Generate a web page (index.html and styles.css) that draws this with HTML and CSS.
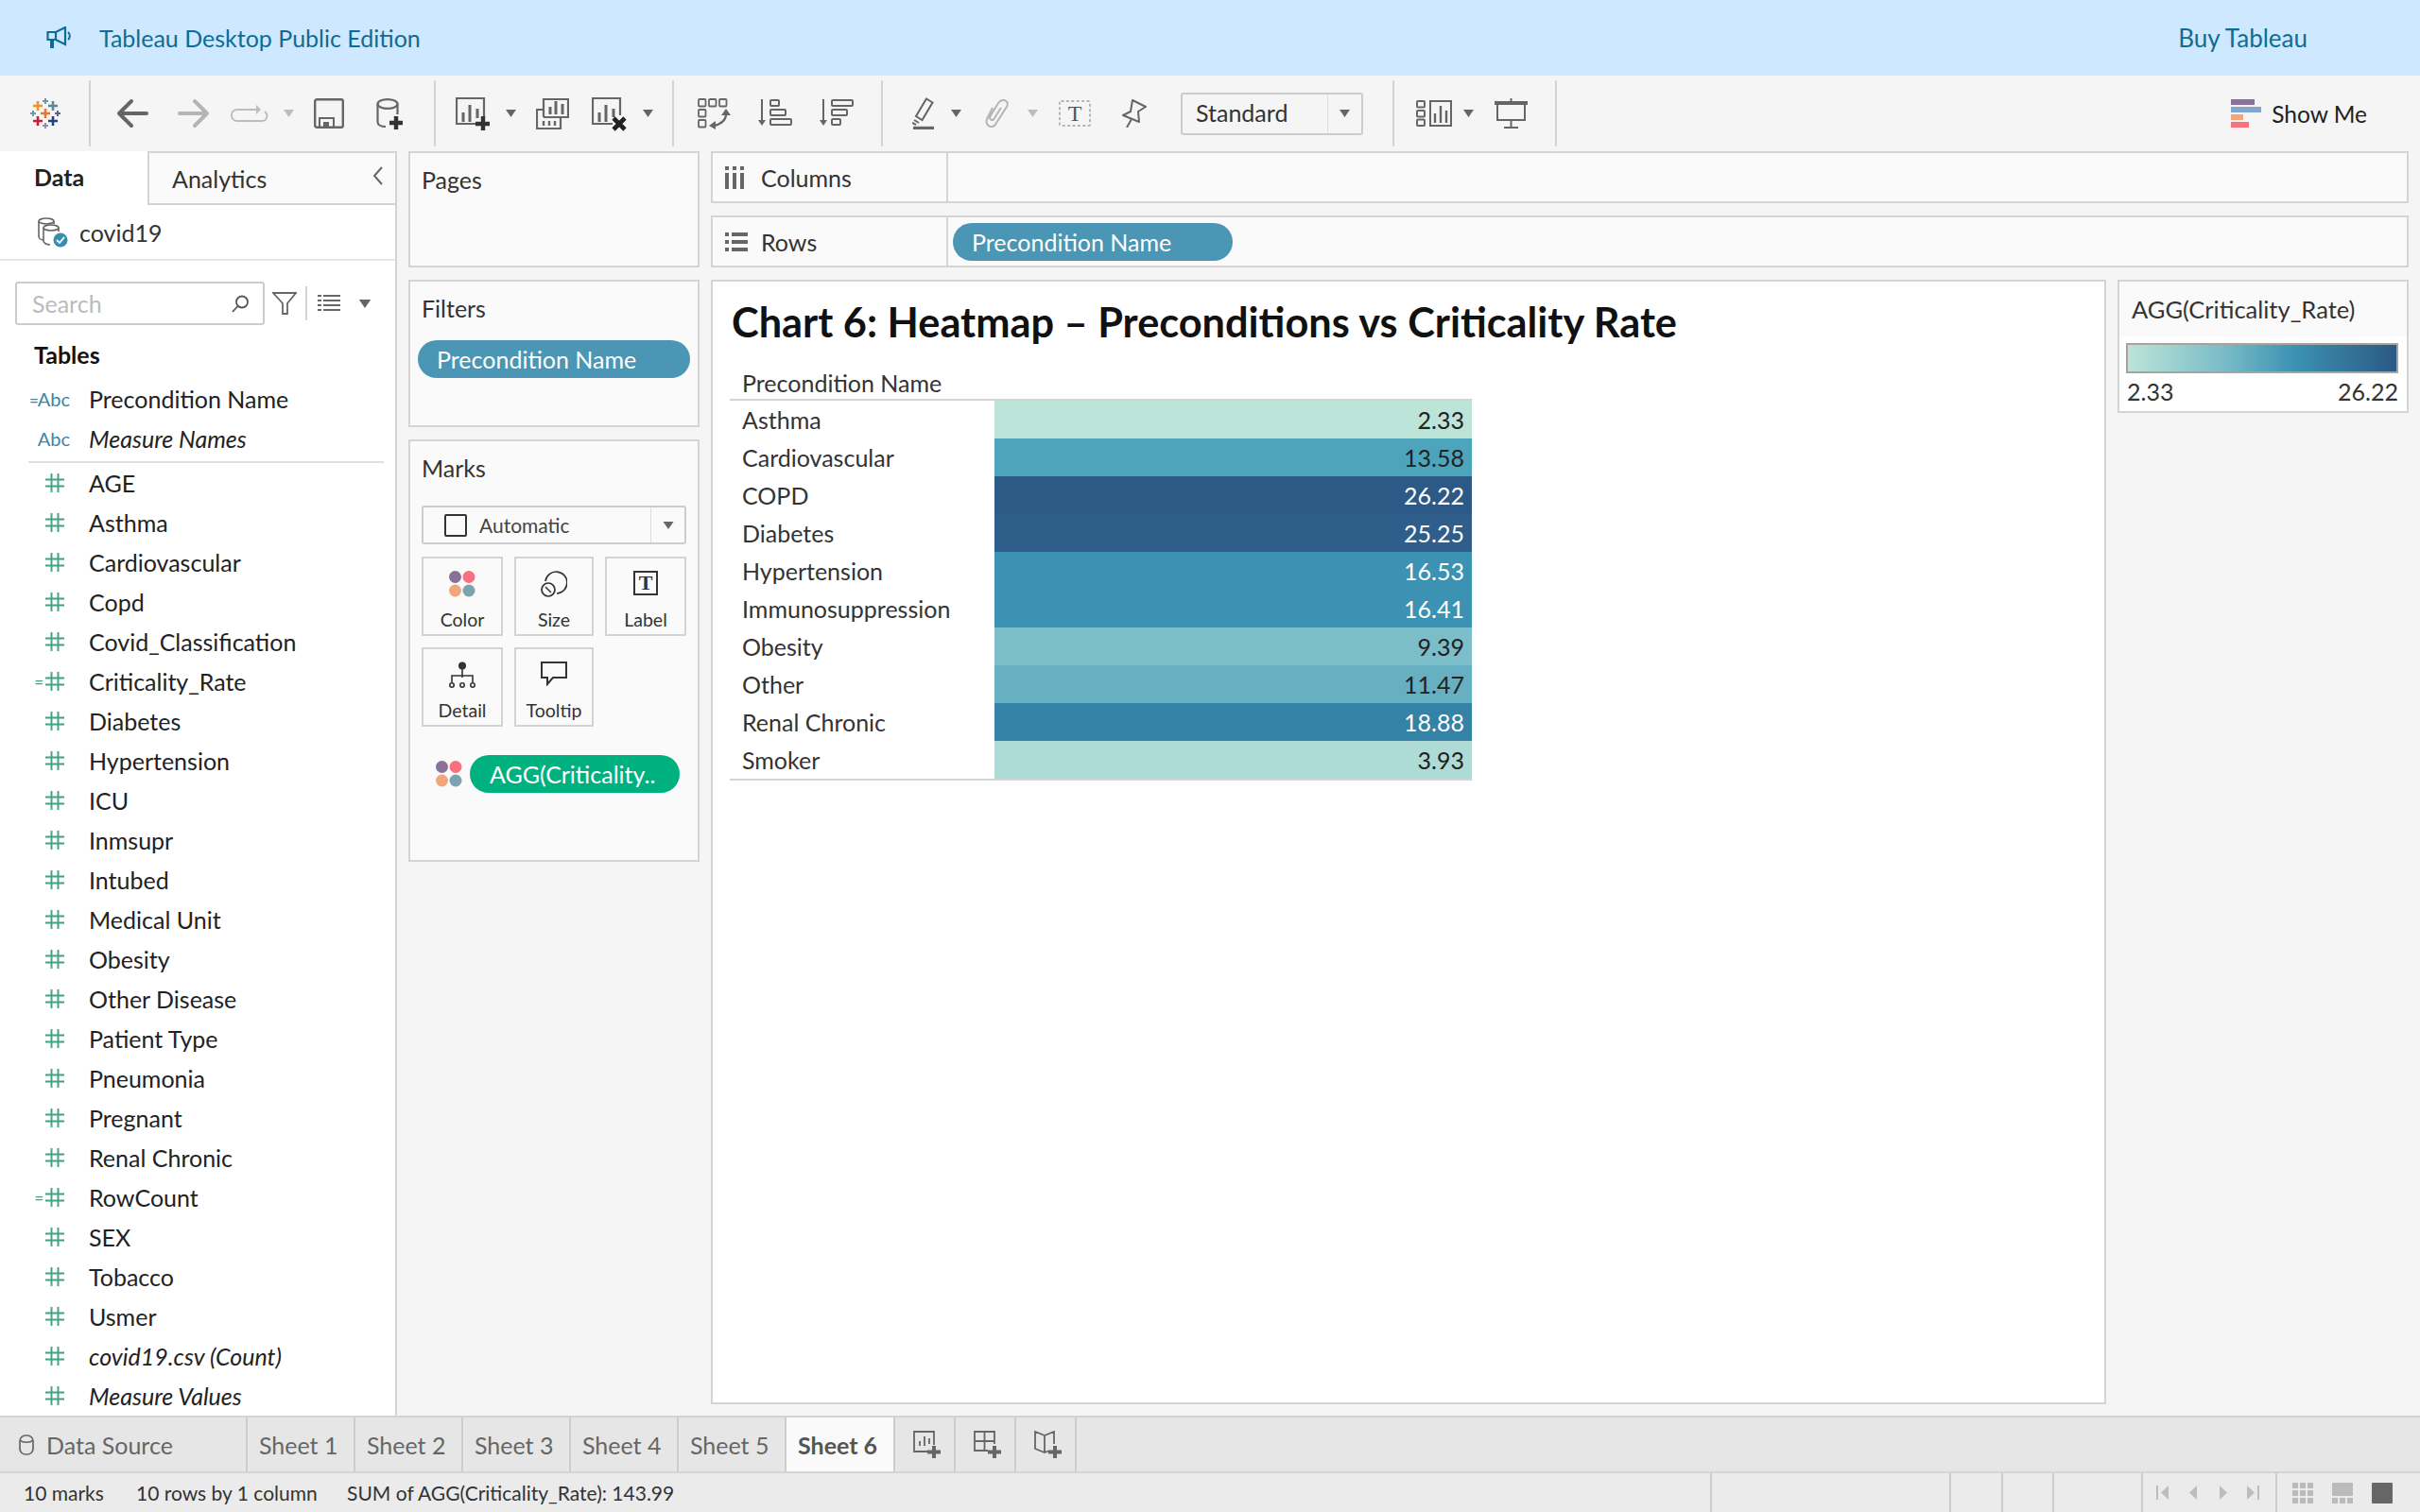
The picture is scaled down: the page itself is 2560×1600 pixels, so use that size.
FILE: index.html
```html
<!DOCTYPE html>
<html lang="en">
<head>
    <meta charset="UTF-8">
    <title>Tableau Desktop Public Edition</title>
    <link rel="stylesheet" href="styles.css">
</head>
<body>
    <svg class="defs" width="0" height="0">
        <symbol id="hash" viewBox="0 0 20 20">
            <path d="M6.5 0V20M13.5 0V20M0 6.5H20M0 13.5H20" fill="none" stroke="#3ea37e" stroke-width="1.9"/>
        </symbol>
        <symbol id="dots" viewBox="0 0 28 28">
            <circle cx="6.5" cy="6.5" r="6.5" fill="#8b7099"/>
            <circle cx="21" cy="6.5" r="6.5" fill="#f9707f"/>
            <circle cx="6.5" cy="21" r="6.5" fill="#f1a67b"/>
            <circle cx="21" cy="21" r="6.5" fill="#7ea3b0"/>
        </symbol>
        <symbol id="caret" viewBox="0 0 11 8">
            <path d="M0 0H11L5.5 8Z"/>
        </symbol>
    </svg>

    <div class="banner">
        <svg class="banner-icon" width="26" height="24" viewBox="0 0 26 24" fill="none" stroke="#0f6c94" stroke-width="2.2">
            <path d="M1.500 6H10L20 1V19L10 14H1.500Z"/>
            <path d="M10 6V14"/>
            <path d="M6 14V23" stroke-width="4"/>
            <path d="M23 6C25.500 8 25.500 12 23 14" stroke-width="2"/>
        </svg>
        <span>Tableau Desktop Public Edition</span>
        <span class="buy">Buy Tableau</span>
    </div>

    <div class="toolbar">
        <svg class="t-logo" width="33" height="33" viewBox="0 0 33 33" fill="none" stroke-width="2.6">
            <path d="M11 16H21M16 11V21" stroke="#e8762c"/>
            <path d="M3 8H13M8 3V13" stroke="#f0932f"/>
            <path d="M19 8H29M24 3V13" stroke="#5b879b"/>
            <path d="M3 24H13M8 19V29" stroke="#c72035"/>
            <path d="M19 24H29M24 19V29" stroke="#1f447e"/>
            <g stroke-width="2">
                <path d="M13 3H19M16 0V6" stroke="#7099a6"/>
                <path d="M0 16H6M3 13V19" stroke="#7099a6"/>
                <path d="M26 16H32M29 13V19" stroke="#5b6591"/>
                <path d="M13 29H19M16 26V32" stroke="#7f93b2"/>
            </g>
        </svg>
        <i class="sep s-a"></i>
        <svg class="t-back" width="34" height="32" viewBox="0 0 34 32" fill="none" stroke="#666" stroke-width="4" stroke-linecap="round" stroke-linejoin="round">
            <path d="M32 16H3M16 3L3 16L16 29"/>
        </svg>
        <svg class="t-fwd" width="34" height="32" viewBox="0 0 34 32" fill="none" stroke="#b5b5b5" stroke-width="4" stroke-linecap="round" stroke-linejoin="round">
            <path d="M2 16H31M18 3L31 16L18 29"/>
        </svg>
        <svg class="t-loop" width="40" height="18" viewBox="0 0 40 18" fill="none" stroke="#bdbdbd" stroke-width="2">
            <path d="M28 5H7C-1 5-1 17 7 17H33C39 17 40 10 36 7"/>
            <path d="M27 0L32 5L27 10Z" fill="#bdbdbd" stroke="none"/>
        </svg>
        <svg class="caret dim t-c1" width="11" height="8"><use href="#caret"/></svg>
        <svg class="t-save" width="32" height="32" viewBox="0 0 32 32" fill="none" stroke="#666" stroke-width="2.4">
            <rect x="1.2" y="1.2" width="29.6" height="29.6" rx="2"/>
            <path d="M6 31V21H21V31" stroke-width="2"/>
            <rect x="10" y="25" width="6" height="6" fill="#666" stroke="none"/>
        </svg>
        <svg class="t-ds" width="30" height="33" viewBox="0 0 30 33" fill="none" stroke="#666" stroke-width="2.2">
            <ellipse cx="12" cy="6" rx="10.500" ry="4.800"/>
            <path d="M1.500 6V25C1.500 28 5 30 10 30M22.500 6V17"/>
            <path d="M21 19V33M14 26H28" stroke="#333" stroke-width="4.400"/>
        </svg>
        <i class="sep s-b"></i>
        <svg class="t-new" width="36" height="37" viewBox="0 0 36 37" fill="none" stroke="#666" stroke-width="2.2">
            <path d="M24 29H1V2H30V22"/>
            <path d="M8 27V17M15 27V9M23 23V13" stroke-width="3"/>
            <path d="M29 21V36M21 29H36" stroke="#333" stroke-width="4.400"/>
        </svg>
        <svg class="caret t-c2" width="11" height="8"><use href="#caret"/></svg>
        <svg class="t-dup" width="35" height="35" viewBox="0 0 35 35" fill="none" stroke="#666" stroke-width="2.2">
            <path d="M8 21V2H34V21H26"/>
            <path d="M15 18V10M21 18V4M28 18V7" stroke-width="3"/>
            <path d="M8 13H1V33H26V21H8"/>
            <path d="M8 25V30M14 25V30M20 25V30" stroke-width="2.400"/>
        </svg>
        <svg class="t-clear" width="37" height="37" viewBox="0 0 37 37" fill="none" stroke="#666" stroke-width="2.2">
            <path d="M22 29H1V2H30V20"/>
            <path d="M8 27V17M15 27V9M23 22V13" stroke-width="3"/>
            <path d="M23 23L35 35M35 23L23 35" stroke="#222" stroke-width="4.600"/>
        </svg>
        <svg class="caret t-c3" width="11" height="8"><use href="#caret"/></svg>
        <i class="sep s-c"></i>
        <svg class="t-swap" width="35" height="33" viewBox="0 0 35 33" fill="none" stroke="#666" stroke-width="1.8">
            <rect x="1" y="1" width="7.500" height="7.500" rx="1"/>
            <rect x="12" y="1" width="7.500" height="7.500" rx="1"/>
            <rect x="23" y="1" width="7.500" height="7.500" rx="1"/>
            <rect x="1" y="12" width="7.500" height="7.500" rx="1"/>
            <rect x="1" y="23" width="7.500" height="7.500" rx="1"/>
            <path d="M30 17C30 23 24 28 17 29" stroke-width="2.400"/>
            <path d="M30 11L35 18H25ZM12 29L19 24V33Z" fill="#666" stroke="none"/>
        </svg>
        <svg class="t-asc" width="36" height="33" viewBox="0 0 36 33" fill="none" stroke="#666" stroke-width="2">
            <path d="M4 1V24"/>
            <path d="M0 23H8L4 29Z" fill="#666" stroke="none"/>
            <rect x="13" y="2" width="9" height="6" rx="1"/>
            <rect x="13" y="12" width="16" height="6" rx="1"/>
            <rect x="13" y="22" width="22" height="6" rx="1"/>
        </svg>
        <svg class="t-asc" width="36" height="33" viewBox="0 0 36 33" fill="none" stroke="#666" stroke-width="2">
            <path d="M4 1V24"/>
            <path d="M0 23H8L4 29Z" fill="#666" stroke="none"/>
            <rect x="13" y="2" width="22" height="6" rx="1"/>
            <rect x="13" y="12" width="16" height="6" rx="1"/>
            <rect x="13" y="22" width="9" height="6" rx="1"/>
        </svg>
        <i class="sep s-d"></i>
        <svg class="t-pen" width="23" height="34" viewBox="0 0 23 34" fill="none" stroke="#666" stroke-width="2">
            <path d="M15 1.500L21.500 5.500L10.500 24L4 20Z"/>
            <path d="M2 24L7 27M0 27L4 29"/>
            <path d="M1 32.500H23" stroke-width="3.400"/>
        </svg>
        <svg class="caret t-c4" width="11" height="8"><use href="#caret"/></svg>
        <svg class="t-clip" width="26" height="30" viewBox="0 0 26 30" fill="none" stroke="#b5b5b5" stroke-width="2">
            <path d="M8 9L2.500 20C0 25 3 28.500 6 29C9 29.500 11 27 12 25L23 8C25 4 23 1.500 20 1C17 .5 15.500 2 14 4L5.500 18C4.500 20 5.500 21.500 7 22C8.500 22.500 9.500 21 10 20L17 9"/>
        </svg>
        <svg class="caret dim t-c5" width="11" height="8"><use href="#caret"/></svg>
        <svg class="t-text" width="34" height="28" viewBox="0 0 34 28">
            <rect x="1" y="1" width="32" height="26" rx="1.500" fill="none" stroke="#b5b5b5" stroke-width="2" stroke-dasharray="3 2.400"/>
            <text x="17" y="22" text-anchor="middle" class="svg-t">T</text>
        </svg>
        <svg class="t-pin" width="26" height="30" viewBox="0 0 26 30" fill="none" stroke="#666" stroke-width="2">
            <path d="M11 1L25 8L17 13L18 24L1 17L9 13Z" stroke-linejoin="round"/>
            <path d="M10 21L5 30"/>
        </svg>
        <div class="std">
            <span class="std-label">Standard</span>
            <span class="std-arrow"><svg class="caret" width="11" height="8"><use href="#caret"/></svg></span>
        </div>
        <i class="sep s-e"></i>
        <svg class="t-bars" width="38" height="28" viewBox="0 0 38 28" fill="none" stroke="#666" stroke-width="2">
            <rect x="1" y="1" width="8" height="6.500" rx="1"/>
            <rect x="1" y="11" width="8" height="6.500" rx="1"/>
            <rect x="1" y="20.500" width="8" height="6.500" rx="1"/>
            <rect x="15" y="1" width="22" height="26"/>
            <path d="M20 24V14M26 24V6M32 24V11" stroke-width="2.400"/>
        </svg>
        <svg class="caret t-c6" width="11" height="8"><use href="#caret"/></svg>
        <svg class="t-pres" width="35" height="32" viewBox="0 0 35 32" fill="none" stroke="#666" stroke-width="2">
            <path d="M17.500 0V4"/>
            <path d="M0 5H35" stroke-width="4"/>
            <path d="M3 7V23H32V7M17.500 23V31M10 31H25"/>
        </svg>
        <i class="sep s-f"></i>
        <div class="showme">
            <div class="showme-icon">
                <i class="sm1"></i><i class="sm2"></i><i class="sm3"></i><i class="sm4"></i>
            </div>
            <span>Show Me</span>
        </div>
    </div>

    <div class="main">
        <div class="sidebar">
            <div class="side-tabs">
                <div class="side-tab active">Data</div>
                <div class="side-tab">Analytics
                    <svg class="collapse" width="11" height="20" viewBox="0 0 11 20" fill="none" stroke="#666" stroke-width="2"><path d="M10 1L2 10L10 19"/></svg>
                </div>
            </div>
            <div class="source">
                <svg width="32" height="32" viewBox="0 0 32 32" fill="none" stroke="#666" stroke-width="1.600">
                    <ellipse cx="9" cy="4" rx="8" ry="3"/>
                    <path d="M1 4V20C1 22 3 24 6 24M17 4V7"/>
                    <ellipse cx="14" cy="11" rx="8" ry="3"/>
                    <path d="M6 11V25C6 27 9 29 13 29M22 11V15"/>
                    <circle cx="24" cy="24" r="7.500" fill="#3a8db0" stroke="none"/>
                    <path d="M20 24L23 27L28 21" stroke="#fff" stroke-width="1.800"/>
                </svg>
                <span>covid19</span>
            </div>
            <div class="search-row">
                <div class="search">
                    <span>Search</span>
                    <svg width="18" height="19" viewBox="0 0 18 19" fill="none" stroke="#555" stroke-width="1.800"><circle cx="11" cy="7.500" r="6"/><path d="M6.500 12L1 18"/></svg>
                </div>
                <svg class="filter-icon" width="26" height="24" viewBox="0 0 26 24" fill="none" stroke="#666" stroke-width="1.800"><path d="M1 1H25L16 12V23H11V12Z"/></svg>
                <i class="mini-sep"></i>
                <svg class="list-icon" width="24" height="18" viewBox="0 0 24 18" fill="none" stroke="#666" stroke-width="2"><path d="M0 1H4M6 1H24M0 6H4M6 6H24M0 11H4M6 11H24M0 16H4M6 16H24"/></svg>
                <svg class="caret list-caret" width="14" height="9" viewBox="0 0 11 8"><path d="M0 0H11L5.500 8Z"/></svg>
            </div>
            <div class="tables-title">Tables</div>
            <div class="field"><span class="abc"><b>=</b>Abc</span><span>Precondition Name</span></div>
            <div class="field"><span class="abc">Abc</span><em>Measure Names</em></div>
            <div class="field-line"></div>
            <div class="field"><span class="num"><svg><use href="#hash"/></svg></span><span>AGE</span></div>
            <div class="field"><span class="num"><svg><use href="#hash"/></svg></span><span>Asthma</span></div>
            <div class="field"><span class="num"><svg><use href="#hash"/></svg></span><span>Cardiovascular</span></div>
            <div class="field"><span class="num"><svg><use href="#hash"/></svg></span><span>Copd</span></div>
            <div class="field"><span class="num"><svg><use href="#hash"/></svg></span><span>Covid_Classification</span></div>
            <div class="field"><span class="num"><b>=</b><svg><use href="#hash"/></svg></span><span>Criticality_Rate</span></div>
            <div class="field"><span class="num"><svg><use href="#hash"/></svg></span><span>Diabetes</span></div>
            <div class="field"><span class="num"><svg><use href="#hash"/></svg></span><span>Hypertension</span></div>
            <div class="field"><span class="num"><svg><use href="#hash"/></svg></span><span>ICU</span></div>
            <div class="field"><span class="num"><svg><use href="#hash"/></svg></span><span>Inmsupr</span></div>
            <div class="field"><span class="num"><svg><use href="#hash"/></svg></span><span>Intubed</span></div>
            <div class="field"><span class="num"><svg><use href="#hash"/></svg></span><span>Medical Unit</span></div>
            <div class="field"><span class="num"><svg><use href="#hash"/></svg></span><span>Obesity</span></div>
            <div class="field"><span class="num"><svg><use href="#hash"/></svg></span><span>Other Disease</span></div>
            <div class="field"><span class="num"><svg><use href="#hash"/></svg></span><span>Patient Type</span></div>
            <div class="field"><span class="num"><svg><use href="#hash"/></svg></span><span>Pneumonia</span></div>
            <div class="field"><span class="num"><svg><use href="#hash"/></svg></span><span>Pregnant</span></div>
            <div class="field"><span class="num"><svg><use href="#hash"/></svg></span><span>Renal Chronic</span></div>
            <div class="field"><span class="num"><b>=</b><svg><use href="#hash"/></svg></span><span>RowCount</span></div>
            <div class="field"><span class="num"><svg><use href="#hash"/></svg></span><span>SEX</span></div>
            <div class="field"><span class="num"><svg><use href="#hash"/></svg></span><span>Tobacco</span></div>
            <div class="field"><span class="num"><svg><use href="#hash"/></svg></span><span>Usmer</span></div>
            <div class="field"><span class="num"><svg><use href="#hash"/></svg></span><em>covid19.csv (Count)</em></div>
            <div class="field"><span class="num"><svg><use href="#hash"/></svg></span><em>Measure Values</em></div>
        </div>

        <div class="cards">
            <div class="card pages"><div class="card-title">Pages</div></div>
            <div class="card filters">
                <div class="card-title">Filters</div>
                <div class="pill pill-blue">Precondition Name</div>
            </div>
            <div class="card marks">
                <div class="card-title">Marks</div>
                <div class="mark-type">
                    <i class="mark-box"></i>
                    <span class="mark-name">Automatic</span>
                    <span class="mark-arrow"><svg class="caret" width="12" height="8" viewBox="0 0 11 8"><path d="M0 0H11L5.500 8Z"/></svg></span>
                </div>
                <div class="mark-grid">
                    <div class="mark-btn">
                        <svg width="28" height="28"><use href="#dots"/></svg>
                        <span>Color</span>
                    </div>
                    <div class="mark-btn">
                        <svg width="28" height="28" viewBox="0 0 28 28" fill="none" stroke="#333" stroke-width="1.700">
                            <path d="M5 11A11.500 11.500 0 1 1 17 24"/>
                            <circle cx="8" cy="20" r="7"/>
                            <path d="M5 17L11 23" stroke-width="1.500"/>
                        </svg>
                        <span>Size</span>
                    </div>
                    <div class="mark-btn">
                        <svg width="26" height="26" viewBox="0 0 26 26">
                            <rect x="1" y="1" width="24" height="24" fill="none" stroke="#333" stroke-width="2"/>
                            <text x="13" y="20" text-anchor="middle" class="svg-l">T</text>
                        </svg>
                        <span>Label</span>
                    </div>
                    <div class="mark-btn">
                        <svg width="28" height="28" viewBox="0 0 28 28" fill="none" stroke="#333" stroke-width="1.600">
                            <circle cx="14" cy="4.500" r="4" fill="#333" stroke="none"/>
                            <path d="M14 8V17M3 22V15H25V22"/>
                            <circle cx="3" cy="25" r="2.200"/>
                            <circle cx="14" cy="25" r="2.200"/>
                            <circle cx="25" cy="25" r="2.200"/>
                        </svg>
                        <span>Detail</span>
                    </div>
                    <div class="mark-btn">
                        <svg width="28" height="26" viewBox="0 0 28 26" fill="none" stroke="#333" stroke-width="2">
                            <path d="M1 1H27V17H13L7 24V17H1Z"/>
                        </svg>
                        <span>Tooltip</span>
                    </div>
                </div>
                <div class="mark-pill-row">
                    <svg width="28" height="28"><use href="#dots"/></svg>
                    <div class="pill pill-green">AGG(Criticality..</div>
                </div>
            </div>
        </div>

        <div class="work">
            <div class="card shelf">
                <div class="shelf-label">
                    <svg width="20" height="24" viewBox="0 0 20 24" fill="#666"><rect x="0" y="0" width="4" height="4"/><rect x="8" y="0" width="4" height="4"/><rect x="16" y="0" width="4" height="4"/><rect x="0" y="7" width="4" height="17"/><rect x="8" y="7" width="4" height="17"/><rect x="16" y="7" width="4" height="17"/></svg>
                    <span>Columns</span>
                </div>
            </div>
            <div class="card shelf">
                <div class="shelf-label">
                    <svg width="24" height="20" viewBox="0 0 24 20" fill="#666"><rect x="0" y="0" width="4" height="4"/><rect x="7" y="0" width="17" height="4"/><rect x="0" y="8" width="4" height="4"/><rect x="7" y="8" width="17" height="4"/><rect x="0" y="16" width="4" height="4"/><rect x="7" y="16" width="17" height="4"/></svg>
                    <span>Rows</span>
                </div>
                <div class="pill pill-blue pill-row">Precondition Name</div>
            </div>
            <div class="stage">
                <div class="viz">
                    <h1 class="viz-title">Chart 6: Heatmap – Preconditions vs Criticality Rate</h1>
                    <div class="hm">
                        <div class="hm-head">Precondition Name</div>
                        <div class="hm-row"><span class="hm-name">Asthma</span><span class="hm-cell c1">2.33</span></div>
                        <div class="hm-row"><span class="hm-name">Cardiovascular</span><span class="hm-cell c2">13.58</span></div>
                        <div class="hm-row"><span class="hm-name">COPD</span><span class="hm-cell c3 light">26.22</span></div>
                        <div class="hm-row"><span class="hm-name">Diabetes</span><span class="hm-cell c4 light">25.25</span></div>
                        <div class="hm-row"><span class="hm-name">Hypertension</span><span class="hm-cell c5 light">16.53</span></div>
                        <div class="hm-row"><span class="hm-name">Immunosuppression</span><span class="hm-cell c5 light">16.41</span></div>
                        <div class="hm-row"><span class="hm-name">Obesity</span><span class="hm-cell c6">9.39</span></div>
                        <div class="hm-row"><span class="hm-name">Other</span><span class="hm-cell c7">11.47</span></div>
                        <div class="hm-row"><span class="hm-name">Renal Chronic</span><span class="hm-cell c8 light">18.88</span></div>
                        <div class="hm-row"><span class="hm-name">Smoker</span><span class="hm-cell c9">3.93</span></div>
                    </div>
                </div>
                <div class="card legend">
                    <div class="legend-title">AGG(Criticality_Rate)</div>
                    <div class="legend-body">
                        <div class="legend-bar"></div>
                        <div class="legend-labels"><span>2.33</span><span>26.22</span></div>
                    </div>
                </div>
            </div>
        </div>
    </div>

    <div class="tabs">
        <div class="tab tab-source">
            <svg width="16" height="22" viewBox="0 0 16 22" fill="none" stroke="#666" stroke-width="1.700"><rect x="1" y="1" width="14" height="20" rx="6"/><path d="M1 6C4 9 12 9 15 6"/></svg>
            <span>Data Source</span>
        </div>
        <div class="tab">Sheet 1</div>
        <div class="tab">Sheet 2</div>
        <div class="tab">Sheet 3</div>
        <div class="tab">Sheet 4</div>
        <div class="tab">Sheet 5</div>
        <div class="tab tab-active">Sheet 6</div>
        <div class="tab tab-add">
            <svg width="30" height="30" viewBox="0 0 30 30" fill="none" stroke="#666" stroke-width="1.800">
                <path d="M16 22H1V1H22V15"/>
                <path d="M7 16V11M12 16V6M17 14V8"/>
                <path d="M22 16V29M15 22.500H29" stroke-width="4"/>
            </svg>
        </div>
        <div class="tab tab-add">
            <svg width="30" height="30" viewBox="0 0 30 30" fill="none" stroke="#666" stroke-width="1.800">
                <path d="M15 21H1V1H22V14M11.500 1V21M1 11H22"/>
                <path d="M22 16V29M15 22.500H29" stroke-width="4"/>
            </svg>
        </div>
        <div class="tab tab-add">
            <svg width="30" height="30" viewBox="0 0 30 30" fill="none" stroke="#666" stroke-width="1.800">
                <path d="M11 5L1 1V19L11 23L15 21.500M11 5L21 1V14M11 5V23"/>
                <path d="M22 16V29M15 22.500H29" stroke-width="4"/>
            </svg>
        </div>
    </div>

    <div class="status">
        <div class="status-text">
            <span class="st-marks">10 marks</span>
            <span class="st-rows">10 rows by 1 column</span>
            <span>SUM of AGG(Criticality_Rate): 143.99</span>
        </div>
        <div class="st-cell w1"></div>
        <div class="st-cell w2"></div>
        <div class="st-cell w3"></div>
        <div class="st-cell w4"></div>
        <div class="st-cell st-nav">
            <svg class="nav-first" width="13" height="15" viewBox="0 0 13 15" fill="#bdbdbd"><rect width="2" height="15"/><path d="M13 0V15L5 7.500Z"/></svg>
            <svg class="nav-prev" width="10" height="15" viewBox="0 0 10 15" fill="#bdbdbd"><path d="M9 0V15L1 7.500Z"/></svg>
            <svg class="nav-next" width="10" height="15" viewBox="0 0 10 15" fill="#bdbdbd"><path d="M1 0V15L9 7.500Z"/></svg>
            <svg class="nav-last" width="13" height="15" viewBox="0 0 13 15" fill="#bdbdbd"><rect x="11" width="2" height="15"/><path d="M0 0V15L8 7.500Z"/></svg>
        </div>
        <div class="st-cell st-views">
            <svg width="22" height="22" viewBox="0 0 22 22" fill="#bbb"><path d="M0 0h6v6H0zM8 0h6v6H8zM16 0h6v6h-6zM0 8h6v6H0zM8 8h6v6H8zM16 8h6v6h-6zM0 16h6v6H0zM8 16h6v6h-6zM16 16h6v6h-6z"/></svg>
            <svg width="22" height="22" viewBox="0 0 22 22" fill="#bbb"><path d="M0 0h22v14H0zM0 16h6v6H0zM8 16h6v6H8zM16 16h6v6h-6z"/></svg>
            <svg width="22" height="22" viewBox="0 0 22 22" fill="#666"><rect width="22" height="22" rx="1"/></svg>
        </div>
    </div>
</body>
</html>
```

FILE: styles.css
```css
* {
    box-sizing: border-box;
}
html, body {
    margin: 0;
    height: 100%;
}
body {
    display: flex;
    flex-direction: column;
    width: 2560px;
    height: 1600px;
    overflow: hidden;
    font-family: Lato, "Liberation Sans", sans-serif;
    font-size: 25px;
    color: #222;
    background-color: #f5f5f5;
}
.defs {
    position: absolute;
}
svg {
    display: block;
    flex: none;
}
i {
    display: block;
    flex: none;
}

/* top banner */
.banner {
    display: flex;
    align-items: center;
    height: 80px;
    flex: none;
    padding: 0 119px 0 49px;
    background-color: #cde8ff;
    color: #0f6c94;
}
.banner-icon {
    margin-right: 30px;
}
.buy {
    margin-left: auto;
    font-size: 26px;
}

/* toolbar */
.toolbar {
    display: flex;
    align-items: center;
    height: 80px;
    flex: none;
    padding-left: 32px;
    background-color: #f5f5f5;
}
.sep {
    width: 2px;
    height: 70px;
    background-color: #d4d4d4;
}
.caret {
    fill: #666;
}
.caret.dim {
    fill: #bdbdbd;
}
.s-a { margin-left: 29px; }
.s-b { margin-left: 31px; }
.s-c { margin-left: 20px; }
.s-d { margin-left: 29px; }
.s-e { margin-left: 31px; }
.s-f { margin-left: 29px; }
.t-back { margin-left: 27px; }
.t-fwd { margin-left: 31px; }
.t-loop { margin-left: 22px; }
.t-c1 { margin-left: 16px; }
.t-save { margin-left: 21px; }
.t-ds { margin-left: 34px; }
.t-new { margin-left: 21px; }
.t-c2 { margin-left: 17px; }
.t-dup { margin-left: 21px; }
.t-clear { margin-left: 24px; }
.t-c3 { margin-left: 17px; }
.t-swap { margin-left: 25px; }
.t-asc { margin-left: 29px; }
.t-pen { margin-left: 31px; }
.t-c4 { margin-left: 18px; }
.t-clip { margin-left: 25px; }
.t-c5 { margin-left: 19px; }
.t-text { margin-left: 22px; }
.t-pin { margin-left: 33px; }
.t-bars { margin-left: 23px; }
.t-c6 { margin-left: 12px; }
.t-pres { margin-left: 22px; }
.svg-t {
    font-family: "Liberation Serif", serif;
    font-size: 24px;
    fill: #555;
}
.svg-l {
    font-family: "Liberation Serif", serif;
    font-size: 22px;
    font-weight: bold;
    fill: #333;
}
.std {
    display: flex;
    width: 193px;
    height: 45px;
    margin-left: 36px;
    border: 2px solid #ccc;
    border-radius: 3px;
}
.std-label {
    flex: 1;
    padding-left: 14px;
    line-height: 39px;
    color: #333;
}
.std-arrow {
    display: flex;
    align-items: center;
    justify-content: center;
    width: 36px;
    border-left: 1px solid #ddd;
}
.showme {
    display: flex;
    align-items: center;
    margin-left: auto;
    padding-right: 56px;
    font-size: 24.5px;
}
.showme-icon {
    display: flex;
    flex-direction: column;
    gap: 2px;
    width: 32px;
    margin-right: 11px;
}
.showme-icon i {
    height: 6px;
}
.sm1 { width: 25px; background-color: #8b7099; }
.sm2 { width: 32px; background-color: #84a6cc; }
.sm3 { width: 13px; background-color: #f1a67b; }
.sm4 { width: 19px; background-color: #f9707f; }

/* main area */
.main {
    display: flex;
    height: 1340px;
    flex: none;
    padding-right: 12px;
    border-bottom: 2px solid #d4d4d4;
}

/* data pane */
.sidebar {
    width: 420px;
    flex: none;
    overflow: hidden;
    background-color: #fff;
    border-right: 2px solid #d4d4d4;
}
.side-tabs {
    display: flex;
    height: 57px;
}
.side-tab {
    position: relative;
    flex: 1;
    padding: 12px 0 0 24px;
    background-color: #fafafa;
    border-top: 2px solid #d4d4d4;
    border-left: 2px solid #d4d4d4;
    border-bottom: 2px solid #d4d4d4;
    color: #333;
}
.side-tab.active {
    flex: none;
    width: 156px;
    padding-left: 36px;
    background-color: #fff;
    border: 0;
    font-weight: bold;
    color: #222;
}
.collapse {
    position: absolute;
    top: 14px;
    right: 13px;
}
.source {
    display: flex;
    align-items: center;
    gap: 12px;
    height: 59px;
    padding-left: 40px;
    border-bottom: 2px solid #e6e6e6;
    color: #333;
}
.search-row {
    display: flex;
    align-items: center;
    height: 46px;
    margin-top: 22px;
    padding-left: 16px;
}
.search {
    display: flex;
    align-items: center;
    justify-content: space-between;
    width: 264px;
    height: 46px;
    padding: 0 15px 0 16px;
    border: 2px solid #ccc;
    border-radius: 3px;
    color: #bbb;
}
.filter-icon {
    margin-left: 8px;
}
.mini-sep {
    width: 2px;
    height: 36px;
    margin-left: 9px;
    background-color: #d4d4d4;
}
.list-icon {
    margin-left: 11px;
}
.list-caret {
    margin-left: 19px;
}
.tables-title {
    margin: 15px 0 10px 36px;
    font-weight: bold;
    line-height: 32px;
    color: #111;
}
.field {
    display: flex;
    align-items: center;
    height: 42px;
    white-space: nowrap;
}
.field-line {
    height: 2px;
    margin: 3px 12px 0 30px;
    background-color: #e0e0e0;
}
.abc {
    width: 74px;
    margin-right: 20px;
    font-size: 20px;
    text-align: right;
    color: #3a86a8;
}
.abc b,
.num b {
    font-size: 17px;
    font-weight: normal;
    letter-spacing: -1px;
    color: #3a86a8;
}
.num {
    display: flex;
    align-items: center;
    justify-content: flex-end;
    gap: 3px;
    width: 68px;
    margin-right: 26px;
}
.num svg {
    width: 20px;
    height: 20px;
}
.num b {
    color: #3ea37e;
}

/* cards */
.cards {
    display: flex;
    flex-direction: column;
    gap: 13px;
    width: 308px;
    flex: none;
    margin: 0 12px;
}
.card {
    background-color: #fafafa;
    border: 2px solid #d4d4d4;
}
.card-title {
    padding: 13px 0 0 12px;
    color: #333;
}
.pages {
    height: 123px;
}
.filters {
    height: 156px;
}
.marks {
    height: 447px;
}
.pill {
    height: 40px;
    border-radius: 20px;
    line-height: 40px;
    color: #fff;
    white-space: nowrap;
}
.pill-blue {
    background-color: #4a96b4;
    padding-left: 20px;
}
.filters .pill {
    width: 288px;
    margin: 19px 0 0 8px;
}
.mark-type {
    display: flex;
    align-items: center;
    width: 280px;
    height: 41px;
    margin: 25px 0 0 12px;
    background-color: #fafafa;
    border: 2px solid #ccc;
    border-radius: 3px;
    font-size: 21px;
    color: #444;
}
.mark-box {
    width: 24px;
    height: 24px;
    margin-left: 22px;
    border: 2px solid #333;
    border-radius: 2px;
}
.mark-name {
    flex: 1;
    margin-left: 13px;
}
.mark-arrow {
    display: flex;
    align-items: center;
    justify-content: center;
    width: 36px;
    height: 100%;
    border-left: 1px solid #ddd;
}
.mark-grid {
    display: grid;
    grid-template-columns: 86px 84px 86px;
    grid-auto-rows: 84px;
    gap: 12px;
    margin: 13px 0 0 12px;
}
.mark-btn {
    display: flex;
    flex-direction: column;
    align-items: center;
    justify-content: space-between;
    padding: 13px 0 4px;
    border: 2px solid #d4d4d4;
    font-size: 19.5px;
    color: #333;
}
.mark-pill-row {
    display: flex;
    align-items: center;
    gap: 8px;
    margin: 30px 0 0 27px;
}
.pill-green {
    width: 222px;
    padding-left: 21px;
    background-color: #00b180;
}

/* shelves and worksheet */
.work {
    display: flex;
    flex-direction: column;
    gap: 13px;
    flex: 1;
    min-width: 0;
}
.shelf {
    display: flex;
    align-items: center;
    height: 55px;
    flex: none;
}
.shelf-label {
    display: grid;
    grid-template-columns: 38px 1fr;
    align-items: center;
    width: 249px;
    height: 100%;
    padding-left: 13px;
    border-right: 2px solid #d4d4d4;
    color: #333;
}
.pill-row {
    width: 296px;
    margin-left: 5px;
}
.stage {
    display: flex;
    gap: 12px;
    flex: none;
    height: 1190px;
}
.viz {
    flex: 1;
    min-width: 0;
    padding-left: 18px;
    background-color: #fff;
    border: 2px solid #d4d4d4;
}
.viz-title {
    margin: 15px 0 0 2px;
    font-size: 43.3px;
    line-height: 54px;
    font-weight: bold;
    color: #111;
    white-space: nowrap;
}
.hm {
    width: 785px;
    margin-top: 20px;
    border-bottom: 2px solid #d4d4d4;
    color: #333;
}
.hm-head {
    height: 37px;
    padding-left: 13px;
    line-height: 37px;
    border-bottom: 2px solid #d4d4d4;
}
.hm-row {
    display: flex;
    height: 40px;
    line-height: 40px;
}
.hm-name {
    width: 280px;
    padding-left: 13px;
}
.hm-cell {
    flex: 1;
    padding-right: 8px;
    text-align: right;
    color: #222;
}
.hm-cell.light {
    color: #fff;
}
.c1 { background-color: #bce4d8; }
.c2 { background-color: #4da5bc; }
.c3 { background-color: #2c5985; }
.c4 { background-color: #2e5e89; }
.c5 { background-color: #3b92b2; }
.c6 { background-color: #7bbdc8; }
.c7 { background-color: #66b0c1; }
.c8 { background-color: #3582a7; }
.c9 { background-color: #aedbd5; }
.legend {
    width: 308px;
    height: 141px;
    flex: none;
}
.legend-title {
    height: 58px;
    padding: 14px 0 0 13px;
    font-size: 25.5px;
    color: #333;
}
.legend-body {
    height: 79px;
    padding: 7px 9px 0 7px;
    background-color: #fff;
}
.legend-bar {
    height: 32px;
    border: 2px solid #a8a49a;
    background: linear-gradient(to right, #bce4d8, #7bbdc8 35%, #3b92b2 62%, #2c5985);
}
.legend-labels {
    display: flex;
    justify-content: space-between;
    padding: 4px 0 0 1px;
    color: #333;
}

/* sheet tabs */
.tabs {
    display: flex;
    height: 59px;
    flex: none;
    background-color: #e6e6e6;
    border-bottom: 2px solid #d4d4d4;
    color: #666;
}
.tab {
    display: flex;
    align-items: center;
    width: 114px;
    padding-left: 12px;
    border-right: 2px solid #ccc;
}
.tab-source {
    gap: 13px;
    width: 262px;
    padding-left: 20px;
}
.tab-active {
    width: 115px;
    background-color: #fafafa;
    font-weight: bold;
    color: #555;
}
.tab-add {
    width: 64px;
    padding-left: 19px;
}

/* status bar */
.status {
    display: flex;
    flex: 1;
    background-color: #ebebeb;
    font-size: 21px;
    color: #333;
}
.status-text {
    display: flex;
    align-items: center;
    width: 1809px;
    padding-left: 25px;
}
.st-marks {
    width: 119px;
}
.st-rows {
    width: 223px;
}
.st-cell {
    height: 100%;
    border-left: 2px solid #ccc;
}
.w1 { width: 253px; }
.w2 { width: 55px; }
.w3 { width: 54px; }
.w4 { width: 94px; }
.st-nav {
    display: flex;
    align-items: center;
    width: 142px;
    padding-left: 14px;
}
.nav-prev { margin-left: 21px; }
.nav-next { margin-left: 22px; }
.nav-last { margin-left: 20px; }
.st-views {
    display: flex;
    align-items: center;
    gap: 20px;
    flex: 1;
    padding-left: 16px;
}
```
